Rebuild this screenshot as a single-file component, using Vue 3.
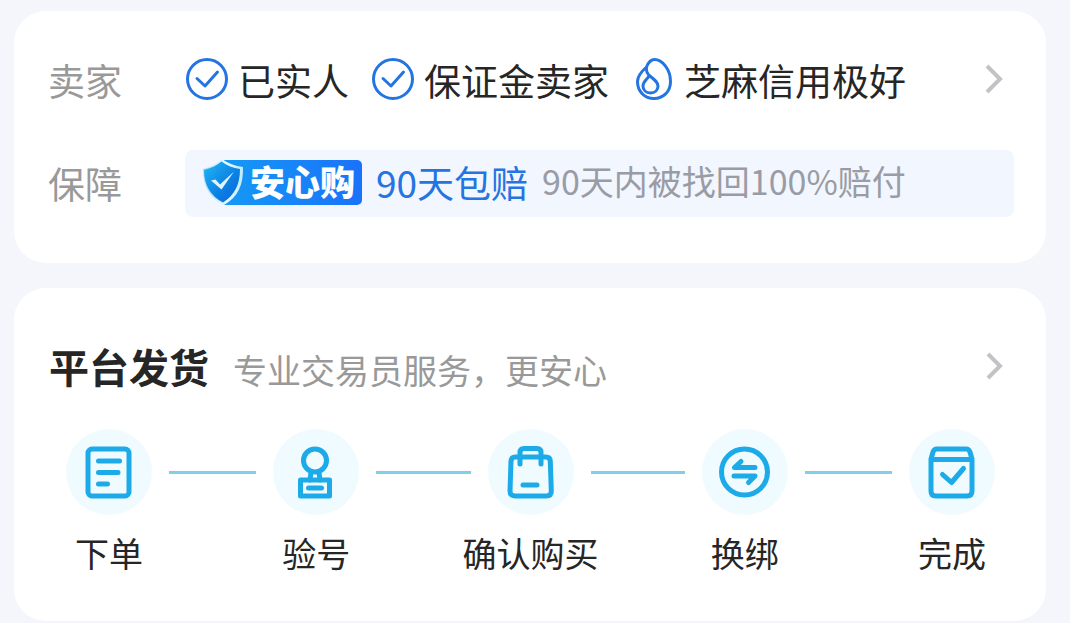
<script setup>
const steps = [
  { icon: 'order', label: '下单' },
  { icon: 'stamp', label: '验号' },
  { icon: 'bag', label: '确认购买' },
  { icon: 'swap', label: '换绑' },
  { icon: 'done', label: '完成' },
]
const credentials = [
  { icon: 'check', label: '已实人' },
  { icon: 'check', label: '保证金卖家' },
  { icon: 'drop', label: '芝麻信用极好' },
]
</script>

<template>
  <main class="page">
    <section class="card seller">
      <div class="row">
        <span class="label">卖家</span>
        <ul class="credentials">
          <li v-for="item in credentials" :key="item.label" class="credential">
            <svg v-if="item.icon === 'check'" class="mark" width="44" height="44" viewBox="0 0 44 44" aria-hidden="true">
              <circle cx="22" cy="22" r="19.5" />
              <path d="M12 21.5l8 7.5 12.5-14" />
            </svg>
            <svg v-else class="mark" width="44" height="44" viewBox="-4 0 44 44" aria-hidden="true">
              <path d="M11.5 10C13.5 5 16 2.5 19.5 2.5C27 2.5 35.5 12 35.5 24.5C35.5 35 28 41.5 19 41.5C9.5 41.5 2.5 34.5 2.5 24.5C2.5 18.5 7 14 11.5 10C11 14 12 17 15.5 19.5C20 23 23 25.5 23 29C23 33 20 36 15.5 36C11 36 8 33 8 29C8 25 11.5 23 14 19" />
            </svg>
            <span>{{ item.label }}</span>
          </li>
        </ul>
        <button class="more" type="button" aria-label="卖家详情">
          <svg width="20" height="32" viewBox="0 0 20 32" aria-hidden="true"><path d="M3 3l13 13L3 29" /></svg>
        </button>
      </div>

      <div class="row">
        <span class="label">保障</span>
        <div class="guarantee">
          <div class="badge">
            <svg class="shield" width="44" height="48" viewBox="0 0 44 48" aria-hidden="true">
              <defs>
                <linearGradient id="shieldFill" x1="0" y1="0" x2="1" y2="1">
                  <stop offset="0" stop-color="#22b8f4" />
                  <stop offset="0.55" stop-color="#0c83e4" />
                  <stop offset="1" stop-color="#0865da" />
                </linearGradient>
                <linearGradient id="shieldEdge" x1="0" y1="0" x2="1" y2="0">
                  <stop offset="0" stop-color="#a9dcfb" />
                  <stop offset="0.6" stop-color="#e9f8ff" />
                  <stop offset="1" stop-color="#bcebff" />
                </linearGradient>
              </defs>
              <path d="M20 1C26 5.5 33 8 41 9C41.5 27 36 39 22 47C9 41 1 30 1 11C8 9.5 15 6 20 1z" fill="url(#shieldEdge)" />
              <path d="M19.5 3.5C25 7.5 31 10 38 11C38 26 33 37 21 44.5C9 38 2 28 2 12C8.5 10.5 15 7.5 19.5 3.5z" fill="url(#shieldFill)" />
              <path d="M9 22.5l4.5-1 4.5 5L32 13.5 19.5 31.5z" fill="#e4f4ff" />
            </svg>
            <span class="badge-text">安心购</span>
          </div>
          <span class="promise">90天包赔</span>
          <span class="detail">90天内被找回100%赔付</span>
        </div>
      </div>
    </section>

    <section class="card delivery">
      <header class="heading">
        <h2>平台发货</h2>
        <p>专业交易员服务，更安心</p>
        <button class="more" type="button" aria-label="平台发货详情">
          <svg width="20" height="32" viewBox="0 0 20 32" aria-hidden="true"><path d="M4 4l12 12L4 28" /></svg>
        </button>
      </header>

      <ol class="steps">
        <template v-for="(step, index) in steps" :key="step.icon">
          <li v-if="index" class="line" aria-hidden="true"></li>
          <li class="step">
            <span class="disc">
              <svg width="56" height="56" viewBox="0 0 56 56" aria-hidden="true">
                <g v-if="step.icon === 'order'">
                  <rect x="7" y="5" width="41" height="47" rx="4" />
                  <path d="M17.5 17h21M17.5 28.5h19.5M17.5 40h9" />
                </g>
                <g v-else-if="step.icon === 'stamp'">
                  <circle cx="27" cy="16.5" r="11.5" />
                  <path d="M23 28.5l-1 7.5M31 28.5l1 7.5M20.5 44h13" />
                  <rect x="12.5" y="36" width="29" height="16" />
                </g>
                <g v-else-if="step.icon === 'bag'">
                  <path d="M12 13h31q4 0 4.300 4l1 30q0 5-5 5H12q-5 0-5-5l1-30Q8.500 13 12 13z" />
                  <path d="M17 20V8.500q0-4 4-4h13q4 0 4 4V20M20 41h14" />
                </g>
                <g v-else-if="step.icon === 'swap'">
                  <circle cx="27.5" cy="28" r="23" />
                  <path d="M38 23.5H17.5l6.500-6M17 32h21l-6.500 6.500" />
                </g>
                <g v-else>
                  <path d="M13 5h29q3 0 4 3l2 7v32q0 5-5 5H12q-5 0-5-5V15L9 8q1-3 4-3zM7 15.500h41" />
                  <path d="M18.500 30.500l9 8L39.500 24.500" />
                </g>
              </svg>
            </span>
            <span class="step-label">{{ step.label }}</span>
          </li>
        </template>
      </ol>
    </section>
  </main>
</template>

<style>
body {
  margin: 0;
  background: #f5f6fb;
}
</style>

<style scoped>
.page {
  display: flex;
  flex-direction: column;
  gap: 25px;
  padding: 11px 24px 2px 14px;
  color: #262626;
  font-family: "Noto Sans CJK SC", sans-serif;
  font-size: 37px;
  white-space: nowrap;
}
.card {
  background: #fff;
  border-radius: 32px;
}
.seller {
  display: flex;
  flex-direction: column;
  gap: 42px;
  padding: 43px 32px 46px 35px;
}
.row {
  display: flex;
  align-items: center;
  line-height: 52px;
}
.label {
  flex: none;
  width: 137px;
  margin-left: -1px;
  padding-bottom: 2px;
  color: #999;
}
.credentials {
  display: flex;
  flex: 1;
  gap: 22px;
  margin: 0;
  padding: 0 0 2px;
  list-style: none;
}
.credential {
  display: flex;
  gap: 9px;
}
.mark {
  margin-top: 3px;
  fill: none;
  stroke: #2474e2;
  stroke-width: 3;
  stroke-linecap: round;
  stroke-linejoin: round;
}
.more {
  display: flex;
  flex: none;
  margin: 0 10px 4px 0;
  padding: 0;
  border: 0;
  background: none;
  cursor: pointer;
}
.more svg {
  fill: none;
  stroke: #c3c3c7;
  stroke-width: 4;
}
.guarantee {
  display: flex;
  flex: 1;
  align-items: center;
  box-sizing: border-box;
  min-height: 67px;
  padding: 0 0 3px 17px;
  border-radius: 8px;
  background: #f2f6fe;
}
.badge {
  display: flex;
  align-items: center;
  height: 45px;
  margin-right: 14px;
  padding-right: 7px;
  border-radius: 5px;
  background: linear-gradient(90deg, transparent 22px, #1599f5 22px, #1a72fa 100%);
}
.shield {
  margin-right: 4px;
}
.badge-text {
  padding-bottom: 3px;
  color: #fff;
  font-size: 35px;
  font-weight: 900;
  line-height: 42px;
}
.promise {
  margin-right: 14px;
  color: #2474e2;
}
.detail {
  padding-bottom: 2px;
  color: #999ca5;
  font-size: 34px;
}
.delivery {
  padding: 51px 32px 43px 35px;
}
.heading {
  display: flex;
  align-items: center;
}
.heading h2 {
  margin: 0 24px 0 0;
  padding-bottom: 4px;
  font-size: 40px;
  font-weight: 700;
  line-height: 54px;
}
.heading p {
  flex: 1;
  margin: 4px 0 0;
  color: #999;
  font-size: 34px;
  line-height: 50px;
}
.steps {
  display: grid;
  grid-template-columns: 86px 17fr 86px 18fr 86px 18fr 86px 17fr 86px;
  margin: 32px 19px 0 17px;
  padding: 0;
  list-style: none;
}
.step {
  display: flex;
  flex-direction: column;
  align-items: center;
  gap: 13px;
}
.disc {
  display: flex;
  align-items: center;
  justify-content: center;
  width: 86px;
  height: 86px;
  border-radius: 50%;
  background: #f0fbff;
}
.disc svg {
  fill: none;
  stroke: #1cabe8;
  stroke-width: 5;
  stroke-linecap: round;
  stroke-linejoin: round;
}
.step-label {
  font-size: 34px;
  line-height: 50px;
}
.line {
  height: 3px;
  margin: 42px 17px 0;
  background: #84cdeb;
}
</style>
